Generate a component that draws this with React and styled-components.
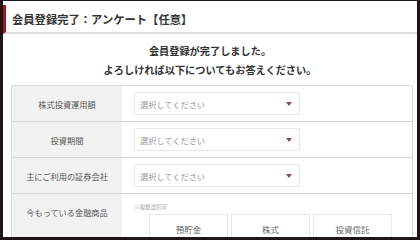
import React from "react";
import styled, { createGlobalStyle } from "styled-components";

const Global = createGlobalStyle`
  html, body { margin: 0; padding: 0; height: 240px; overflow: hidden; background: #1e1616; }
  body { font-family: "Noto Sans CJK JP", "Noto Sans", sans-serif; }
  #root { height: 240px; }
`;

const Panel = styled.div`
  margin: 1px 3px 0 3px;
  height: 236px;
  background: #fff;
  overflow: hidden;
`;

const Header = styled.h1`
  margin: 4px 0 0 0;
  height: 29px;
  box-sizing: border-box;
  border-left: 3px solid #9a1820;
  border-bottom: 2px solid #dddddd;
  padding-left: 6px;
  display: flex;
  align-items: center;
  font-size: 11.3px;
  font-weight: bold;
  color: #333;
`;

const Intro = styled.p`
  margin: 7px 0 0 0;
  text-align: center;
  font-size: 10.2px;
  line-height: 19px;
  font-weight: bold;
  color: #333;
`;

const Table = styled.div`
  margin: 6px 0 0 8px;
  width: 400px;
  border-top: 1px solid #dddddd;
  border-left: 1px solid #dddddd;
  border-right: 1px solid #d4d4d4;
`;

const Row = styled.div`
  display: grid;
  grid-template-columns: 110px 1fr;
  min-height: ${(p) => p.$h || 35}px;
  border-bottom: 1px solid #d4d4d4;
`;

const Label = styled.div`
  background: #f2f2f2;
  display: flex;
  justify-content: center;
  align-items: ${(p) => (p.$top ? "flex-start" : "center")};
  padding-top: ${(p) => (p.$top ? "12px" : "0")};
  font-size: 8.2px;
  color: #555;
`;

const Cell = styled.div`
  padding: ${(p) => (p.$top ? "8px 0 0 12px" : "0 0 0 12px")};
  display: flex;
  flex-direction: column;
  justify-content: ${(p) => (p.$top ? "flex-start" : "center")};
`;

const Select = styled.div`
  width: 166px;
  height: 23px;
  box-sizing: border-box;
  border: 1px solid #e6e6e6;
  border-radius: 3px;
  display: flex;
  align-items: center;
  justify-content: space-between;
  padding: 0 7px 0 5px;
  font-size: 8.2px;
  color: #999;
`;

const Arrow = styled.span`
  width: 0;
  height: 0;
  border-left: 3px solid transparent;
  border-right: 3px solid transparent;
  border-top: 4px solid #8b4a4e;
`;

const Note = styled.div`
  font-size: 5.5px;
  color: #aaa;
  line-height: 10px;
`;

const Choices = styled.div`
  display: flex;
  gap: 3px;
  margin: 2px 0 0 15px;
`;

const Choice = styled.div`
  width: 79px;
  height: 30px;
  box-sizing: border-box;
  border: 1px solid #e6e6e6;
  display: flex;
  align-items: center;
  justify-content: center;
  font-size: 8.5px;
  color: #666;
`;

const SelectField = () => (
  <Select>
    <span>選択してください</span>
    <Arrow />
  </Select>
);

export default function App() {
  return (
    <>
      <Global />
      <Panel>
        <Header>会員登録完了：アンケート【任意】</Header>
        <Intro>
          会員登録が完了しました。
          <br />
          よろしければ以下についてもお答えください。
        </Intro>
        <Table>
          <Row>
            <Label>株式投資運用額</Label>
            <Cell><SelectField /></Cell>
          </Row>
          <Row>
            <Label>投資期間</Label>
            <Cell><SelectField /></Cell>
          </Row>
          <Row>
            <Label>主にご利用の証券会社</Label>
            <Cell><SelectField /></Cell>
          </Row>
          <Row $h={60}>
            <Label $top>今もっている金融商品</Label>
            <Cell $top>
              <Note>※複数選択可</Note>
              <Choices>
                <Choice>預貯金</Choice>
                <Choice>株式</Choice>
                <Choice>投資信託</Choice>
              </Choices>
            </Cell>
          </Row>
        </Table>
      </Panel>
    </>
  );
}
